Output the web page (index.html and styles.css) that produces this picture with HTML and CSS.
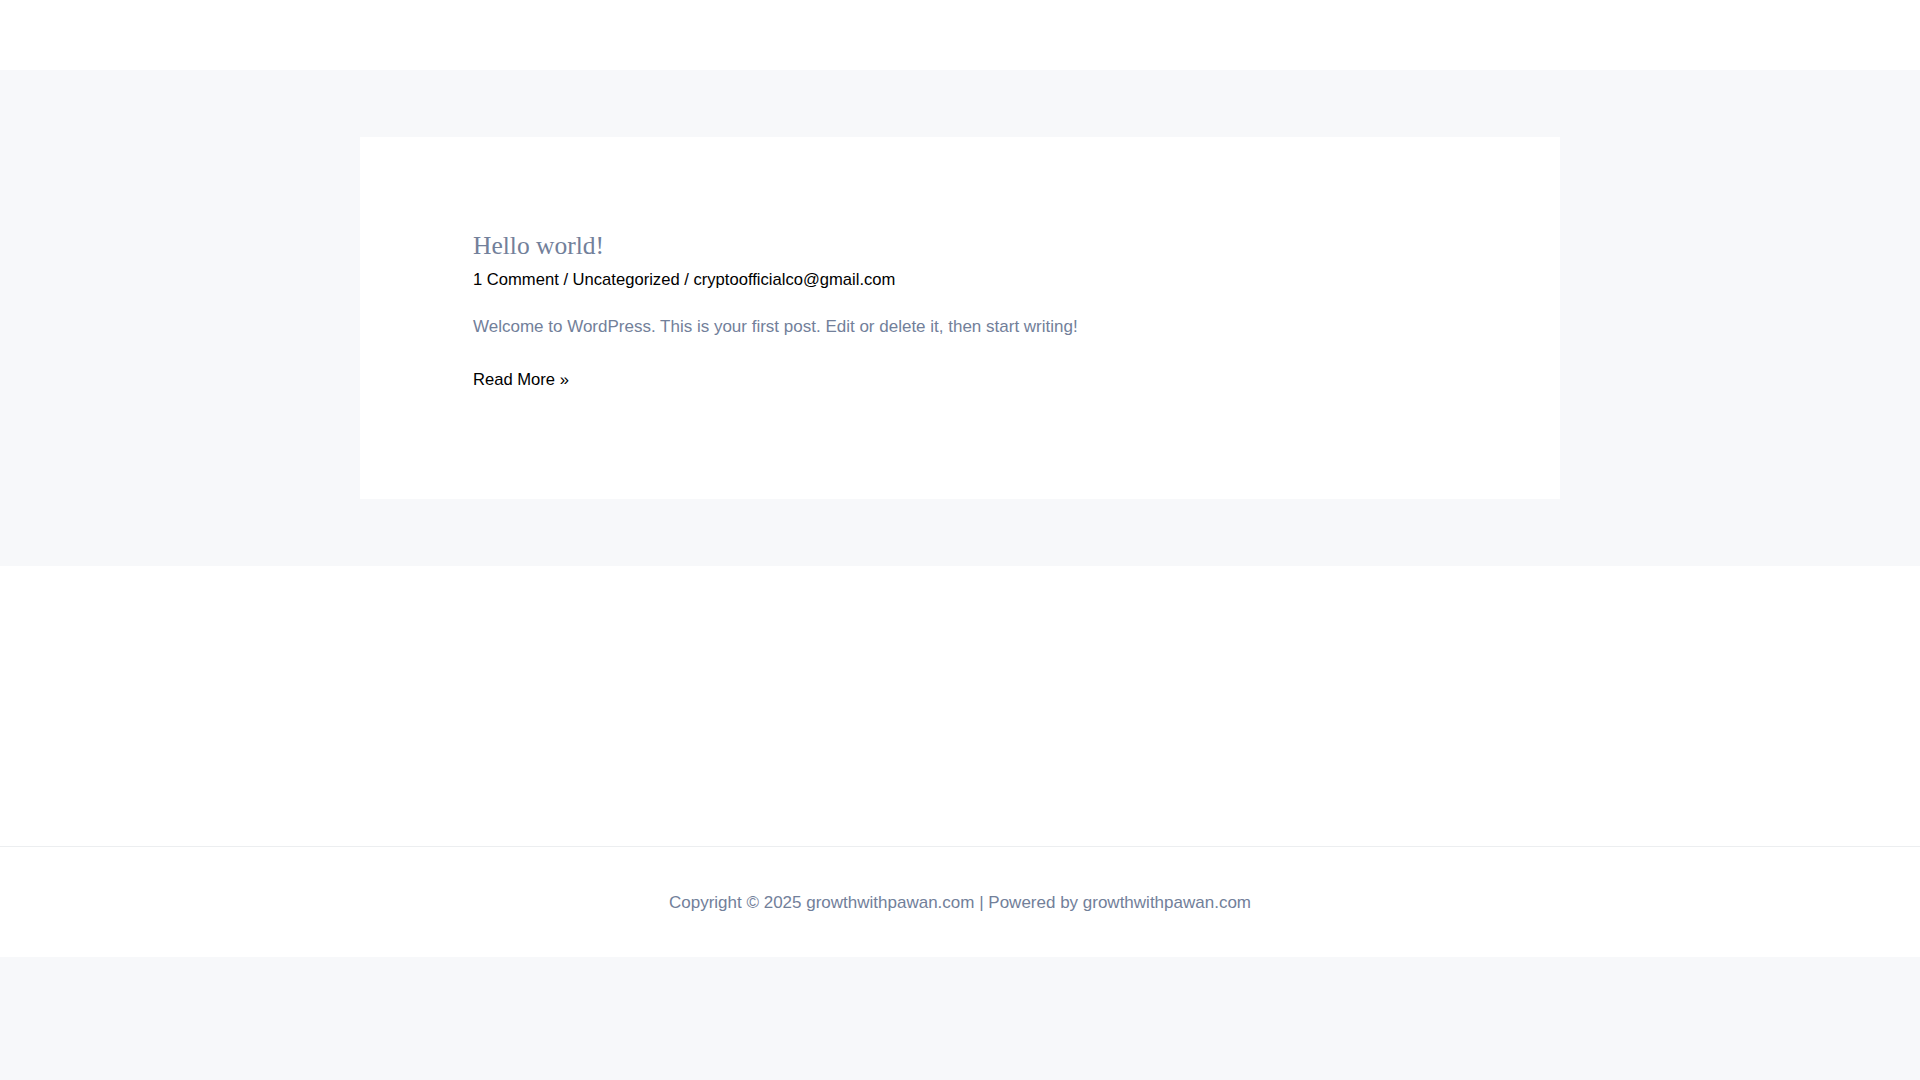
FILE: index.html
```html
<!DOCTYPE html>
<html lang="en">
<head>
<meta charset="utf-8">
<title>growthwithpawan.com</title>
<link rel="stylesheet" href="styles.css">
</head>
<body>
<header class="site-header"></header>
<div class="site-content">
  <div class="container">
    <article class="post-card">
      <h2 class="entry-title">Hello world!</h2>
      <div class="entry-meta"><span>1 Comment</span> / <span>Uncategorized</span> / <span>cryptoofficialco@gmail.com</span></div>
      <div class="entry-content">
        <p>Welcome to WordPress. This is your first post. Edit or delete it, then start writing!</p>
        <p class="read-more">Read More »</p>
      </div>
    </article>
  </div>
</div>
<div class="above-footer"></div>
<footer class="site-footer">
  <div class="footer-copy">Copyright © 2025 growthwithpawan.com | Powered by growthwithpawan.com</div>
</footer>
</body>
</html>
```

FILE: styles.css
```css
html, body {
  margin: 0;
  padding: 0;
}
body {
  background: #f7f8fa;
  font-family: "Liberation Sans", Arial, sans-serif;
  font-size: 17px;
  color: #72809a;
}
.site-header {
  height: 70px;
  background: #ffffff;
}
.site-content {
  padding: 67px 0 67px;
}
.container {
  width: 1200px;
  margin: 0 auto;
}
.post-card {
  background: #ffffff;
  padding: 92px 113px 90px;
  height: 362px;
  box-sizing: border-box;
}
.entry-title {
  margin: 0;
  font-family: "Liberation Serif", "Times New Roman", serif;
  font-weight: 400;
  font-size: 25.5px;
  line-height: 33px;
  color: #72809a;
}
.entry-meta {
  margin-top: 4px;
  font-size: 16.6px;
  color: #000000;
  line-height: 27px;
}
.entry-content p {
  margin: 20px 0 0;
  line-height: 1.7;
}
.entry-content .read-more {
  margin-top: 24px;
  font-size: 16.6px;
  color: #000000;
}
.above-footer {
  height: 280px;
  background: #ffffff;
  border-bottom: 1px solid #eceef0;
}
.site-footer {
  height: 110px;
  background: #ffffff;
  display: flex;
  align-items: center;
  justify-content: center;
  padding-top: 1px;
  box-sizing: border-box;
}
.footer-copy {
  color: #72809a;
  line-height: 1.6;
}
```
